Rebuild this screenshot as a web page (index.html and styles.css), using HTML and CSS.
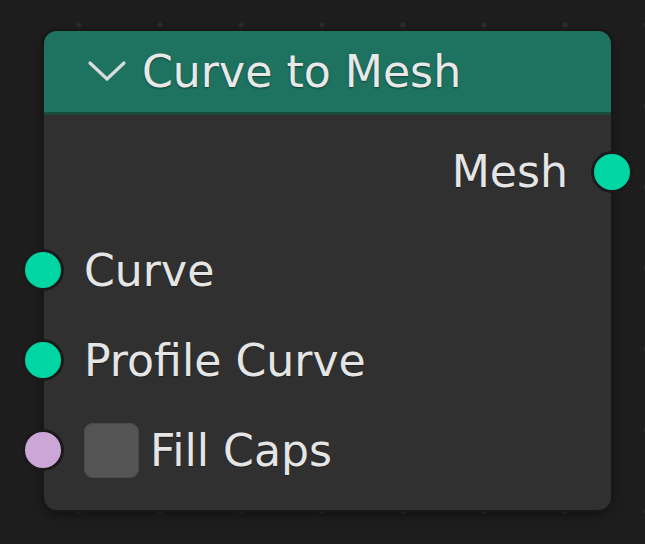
FILE: index.html
```html
<!DOCTYPE html>
<html>
<head>
<meta charset="utf-8">
<link rel="stylesheet" href="styles.css">
</head>
<body>
<div class="canvas">
  <div class="node">
    <div class="header">
      <svg class="chevron" width="40" height="24" viewBox="0 0 40 24"><path d="M3 5 L20 21 L37 5" fill="none" stroke="#d8dcda" stroke-width="3.2" stroke-linecap="round" stroke-linejoin="round"/></svg>
      <span class="title">Curve to Mesh</span>
    </div>
    <div class="body">
      <div class="row out">
        <span class="label">Mesh</span>
        <span class="socket geo right"></span>
      </div>
      <div class="inputs">
        <div class="row in">
          <span class="socket geo left"></span>
          <span class="label">Curve</span>
        </div>
        <div class="row in">
          <span class="socket geo left"></span>
          <span class="label">Profile Curve</span>
        </div>
        <div class="row in">
          <span class="socket bool left"></span>
          <span class="check"></span>
          <span class="label">Fill Caps</span>
        </div>
      </div>
    </div>
  </div>
</div>
</body>
</html>
```
FILE: styles.css
```css
html, body {
  margin: 0;
  padding: 0;
}
body {
  width: 645px;
  height: 544px;
  overflow: hidden;
  background-color: #1d1d1d;
  background-image: radial-gradient(circle, #2c2c2c 0, #2c2c2c 2.2px, transparent 2.8px);
  background-size: 81px 81px;
  background-position: 38.5px -15.5px;
  font-family: "DejaVu Sans", sans-serif;
}
.canvas {
  padding: 31px 0 0 44px;
}
.node {
  position: relative;
  width: 567px;
  height: 479px;
  box-sizing: border-box;
  background: #303030;
  border-radius: 13px;
  box-shadow: 0 0 0 2px #171717, 0 4px 12px rgba(0,0,0,0.45);
  display: flex;
  flex-direction: column;
}
.header {
  height: 81px;
  background: #1e7260;
  border-bottom: 3px solid #1a4a3e;
  border-radius: 13px 13px 0 0;
  display: flex;
  align-items: center;
  padding-left: 43px;
  gap: 15px;
  flex-shrink: 0;
}
.chevron {
  display: block;
  margin-top: -3px;
}
.title {
  font-size: 44.2px;
  color: #e8e8e8;
  text-shadow: 0 1px 2px rgba(0,0,0,0.45);
  margin-top: 0;
}
.body {
  padding: 12px 0 15px;
  display: flex;
  flex-direction: column;
  gap: 8px;
}
.inputs {
  display: flex;
  flex-direction: column;
}
.row {
  position: relative;
  height: 90px;
  display: flex;
  align-items: center;
}
.row.out {
  justify-content: flex-end;
  padding-right: 43px;
}
.row.in {
  padding-left: 40px;
}
.row.in .label {
  margin-top: 3px;
}
.label {
  font-size: 44.2px;
  color: #e5e5e5;
  line-height: 1;
  text-shadow: 0 1px 1px rgba(0,0,0,0.35);
}
.socket {
  position: absolute;
  top: 50%;
  width: 36px;
  height: 36px;
  border-radius: 50%;
  border: 3.5px solid #1a1a1a;
  transform: translateY(-50%);
}
.socket.left {
  left: -22px;
}
.socket.right {
  right: -21.5px;
}
.socket.geo {
  background: #00d6a3;
}
.socket.bool {
  background: #cca6d6;
}
.check {
  width: 55px;
  height: 55px;
  border-radius: 9px;
  background: #545454;
  box-shadow: inset 0 0 0 1px #4a4a4a;
  margin-right: 11px;
  margin-top: 1px;
}
```
